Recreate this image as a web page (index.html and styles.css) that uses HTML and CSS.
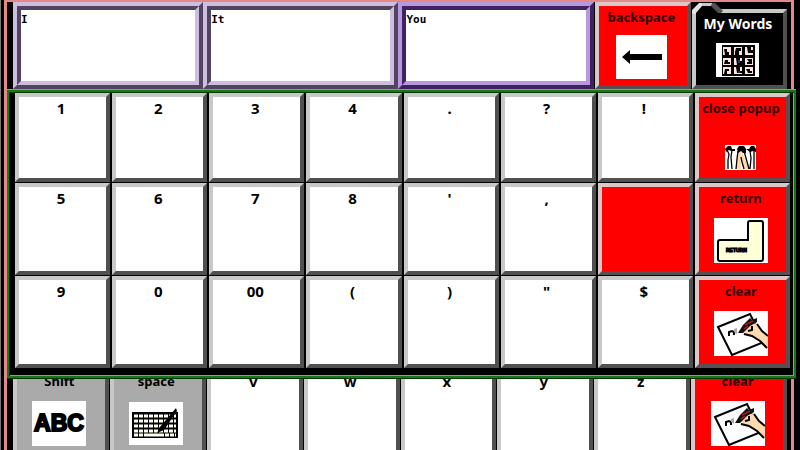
FILE: index.html
```html
<!DOCTYPE html>
<html lang="en">
<head>
<meta charset="utf-8">
<title>Word board</title>
<link rel="stylesheet" href="styles.css">
</head>
<body>
<svg class="defs" aria-hidden="true">
  <symbol id="write" viewBox="0 0 54 45">
    <path d="M0 0H54V45H0z" fill="#fff"/>
    <path d="M4 16L36 3L50 31L18 44z" fill="#fff" stroke="#000" stroke-width="2"/>
    <path d="M30 23L34 14L43 12L48 19L54 25V37L46 30L36 25z" fill="#ffd9b0"/>
    <path d="M43 13L48 20L54 25M30 23L38 25L46 30L53 37M34 20L38 19V15" fill="none" stroke="#000" stroke-width="2"/>
    <path d="M24 22L29 14L36 7L38 9L43 7V11L36 15L29 22z" fill="#111"/>
    <path d="M31 14L39 10M30 18L34 15" stroke="#b01818" stroke-width="1.5"/>
    <path d="M15 25V21L18 20L20 21V24" fill="none" stroke="#000" stroke-width="2"/>
    <path d="M20 18L23 17V23L20 21z" fill="#aaa"/>
  </symbol>
</svg>
<main class="board">
  <div class="row top">
    <button class="key msg">I</button>
    <button class="key msg">It</button>
    <button class="key msg active">You</button>
    <button class="key red erase">backspace
      <svg class="pic back" viewBox="0 0 51 44"><path d="M0 0H51V44H0z" fill="#fff"/><path d="M6 22L14 15V19H46V25H14V29z"/></svg>
    </button>
    <button class="key folder">My Words
      <svg class="pic words" viewBox="0 0 43 34"><path d="M0 0H43V34H0z" fill="#fff"/><path d="M6 2H39V33H6z"/><path d="M7 4h8v8H7zM18 4h8v8h-8zM29 4h8v8h-8zM7 15h8v7H7zM18 15h8v7h-8zM29 15h8v7h-8zM7 24h8v7H7zM18 24h8v7h-8zM29 24h8v7h-8z" fill="#ffe4e0"/><path d="M8 6h3v3h2v3H9zM20 5h5v3h-2v4h-4V9zM31 4h4v3h2v3h-5zM9 17h3v2h2v2H8zM20 15h4v3h2v4h-5zM31 16h5v5h-5v-2h2zM9 26h4v2h-2v3H8zM20 24h4v4h2v2h-5zM30 26h4v2h2v2h-4z"/><path d="M22 17h2v3h-2zM22 28h2v2h-2z" fill="#203070"/></svg>
      <svg class="tab" viewBox="0 0 32 12"><path d="M0 0H25L32 7H27V12H0z"/><path d="M8 1H22V4H8z" fill="#c8c8c8"/><path d="M0 8L7 1H10V4L4 11V12H0z" fill="#e4e4e4"/><path d="M20 1H23L31 9L29 11H26L19 4z" fill="#505050"/></svg>
    </button>
  </div>
  <div class="row bottom">
    <button class="key grey">Shift
      <svg class="pic" viewBox="0 0 54 45"><path d="M0 0H54V45H0z" fill="#fff"/><text x="27" y="30" text-anchor="middle" class="abc">ABC</text></svg>
    </button>
    <button class="key grey">space
      <svg class="pic" viewBox="0 0 54 43"><path d="M0 0H54V43H0z" fill="#fff"/><path d="M3 10H49V36H3z"/><path d="M5 14H47M5 19H47M5 24H47M5 29H47M5 33H14M36 33H47" stroke="#fffff0" stroke-width="3" stroke-dasharray="4 1"/><path d="M15 33H35" stroke="#fffff0" stroke-width="3"/><path d="M47 6L31 25L28 31L35 28L48 9z"/></svg>
    </button>
    <button class="key">v</button>
    <button class="key">w</button>
    <button class="key">x</button>
    <button class="key">y</button>
    <button class="key">z</button>
    <button class="key red">clear<svg class="pic"><use href="#write"/></svg></button>
  </div>
</main>
<section class="popup" aria-label="Numbers">
  <button class="key">1</button><button class="key">2</button><button class="key">3</button><button class="key">4</button><button class="key">.</button><button class="key">?</button><button class="key">!</button>
  <button class="key red">close popup
    <svg class="pic people" viewBox="0 0 31 25"><path d="M0 0H31V25H0z" fill="#fff"/><path d="M12 6H16V24H11zM17 6L24 24H19L16 14z" fill="#ffd9b0"/><path d="M2 5L4 9L3 15V24M7 5L6 12L7 24M13 6L12 14L11 24M16 12L17 17L19 24M19 6L21 13L24 24M25 6L26 13L25 24M29 5V24" fill="none" stroke="#000" stroke-width="1.3"/><path d="M0 4L3 1H6L7 4H10V6H6L4 5L1 7zM12 4L14 1H19L21 4V8H18L16 6L13 8zM21 4H24L26 1H29L31 4V7L28 6L25 7z"/></svg>
  </button>
  <button class="key">5</button><button class="key">6</button><button class="key">7</button><button class="key">8</button><button class="key">'</button><button class="key">,</button><button class="key red" aria-label="blank"></button>
  <button class="key red">return
    <svg class="pic" viewBox="0 0 54 45"><path d="M0 0H54V45H0z" fill="#fff"/><path d="M6 22H34V5Q34 3 36 3H47Q49 3 49 5V41Q49 43 47 43H6Q4 43 4 41V24Q4 22 6 22z" fill="#ffffd8" stroke="#000" stroke-width="2"/><text x="12" y="34" class="tiny">RETURN</text></svg>
  </button>
  <button class="key">9</button><button class="key">0</button><button class="key">00</button><button class="key">(</button><button class="key">)</button><button class="key">"</button><button class="key">$</button>
  <button class="key red">clear<svg class="pic"><use href="#write"/></svg></button>
</section>
</body>
</html>
```
FILE: styles.css
```css
* { box-sizing: border-box; }
body { margin: 0; height: 100vh; overflow: hidden; background: #000; position: relative; border-left: 1px solid #777; }
.defs { position: absolute; width: 0; height: 0; }
.board {
  height: 100%;
  margin: 0 6px 0 3px;
  padding: 0 4px 0 6px;
  border: 3px solid #e48888;
  border-bottom: 0;
  border-top-width: 2px;
  display: flex;
  flex-direction: column;
  justify-content: space-between;
}
.row { display: grid; }
.top { grid-template-columns: 190fr 195fr 195fr 97fr 96fr; height: 87px; }
.bottom { grid-template-columns: repeat(8, 1fr); gap: 1px; height: 92px; margin-bottom: -8px; }
.key {
  position: relative;
  display: flex;
  flex-direction: column;
  align-items: center;
  justify-content: space-between;
  min-width: 0;
  padding: 1px 3px 8px 0;
  border: 4px solid;
  border-color: #c8c8c8 #505050 #505050 #c8c8c8;
  border-radius: 0;
  background: #fff;
  color: #000;
  font: bold 15px/20px "Comic Sans MS", "Noto Sans", sans-serif;
  white-space: nowrap;
}
.red { background: #f00; color: #300; border-color: #d8c8c8 #585050 #585050 #d8c8c8; font-size: 13px; }
.grey { background: #aaa; font-size: 13px; }
.msg {
  align-items: flex-start;
  padding: 4px;
  border-color: #ccbedc #504460 #504460 #ccbedc;
  font: bold 11px/20px "DejaVu Sans Mono", monospace;
}
.msg::before { content: ""; position: absolute; inset: 0; border: 4px solid; border-color: #504460 #ccbedc #ccbedc #504460; }
.active { border-color: #b898dc #402060 #402060 #b898dc; }
.active::before { border-color: #402060 #b898dc #b898dc #402060; }
.erase { margin-left: 1px; padding-bottom: 6px; }
.folder { background: #000; color: #fff; margin: 7px 0 0 1px; font-size: 14px; }
.tab { position: absolute; left: -4px; top: -11px; width: 32px; height: 12px; }
.pic { display: block; width: 54px; height: 45px; flex: none; }
.back { width: 51px; height: 44px; }
.words { width: 43px; height: 34px; }
.people { width: 31px; height: 25px; }
.abc { font: 900 23px "Liberation Sans", sans-serif; stroke: #000; stroke-width: 2px; }
.tiny { font: bold 5px "Liberation Sans", sans-serif; stroke: #000; stroke-width: 1px; }
.popup {
  position: absolute;
  top: 90px;
  left: 6px;
  right: 4px;
  height: 288px;
  display: grid;
  grid-template-columns: repeat(8, 1fr);
  grid-template-rows: 89fr 91fr 92fr;
  gap: 1px 2px;
  padding: 1px 4px 8px 6px;
  border: 2px solid #187818;
  box-shadow: 0 -1px #68b868, 0 1px #003800, inset 1px 1px #003800, inset -1px -1px #68b868;
  background: #000;
}
```
